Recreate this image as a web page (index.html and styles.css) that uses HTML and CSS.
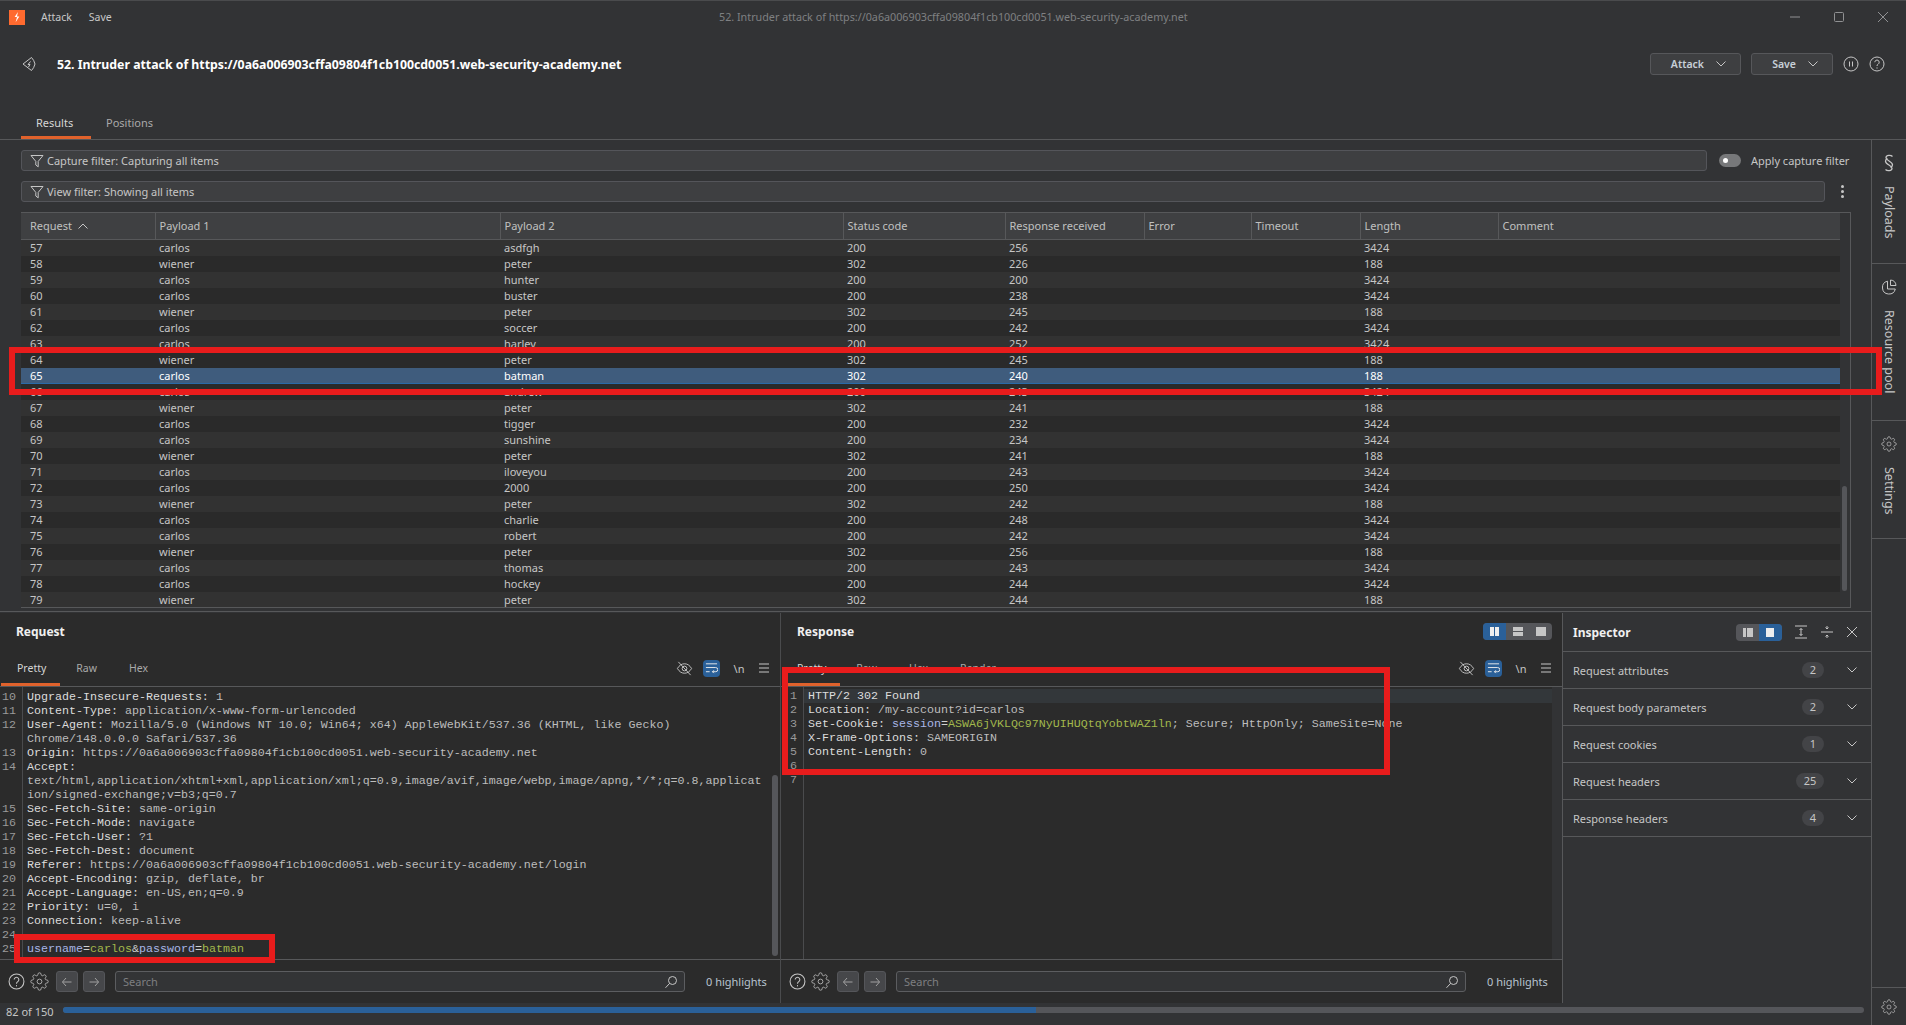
FILE: index.html
```html
<!DOCTYPE html>
<html>
<head>
	<title>52. Intruder attack</title>
	<link rel="stylesheet" href="styles.css">
</head>
<body>
<svg class="defs" width="0" height="0">
	<symbol id="gear" viewBox="0 0 24 24"><circle cx="12" cy="12" r="3"/><path d="M19.4 15a1.65 1.65 0 0 0 .33 1.82l.06.06a2 2 0 0 1 0 2.83 2 2 0 0 1-2.83 0l-.06-.06a1.65 1.65 0 0 0-1.82-.33 1.65 1.65 0 0 0-1 1.51V21a2 2 0 0 1-2 2 2 2 0 0 1-2-2v-.09A1.65 1.65 0 0 0 9 19.4a1.65 1.65 0 0 0-1.82.33l-.06.06a2 2 0 0 1-2.83 0 2 2 0 0 1 0-2.83l.06-.06a1.65 1.65 0 0 0 .33-1.82 1.65 1.65 0 0 0-1.51-1H3a2 2 0 0 1-2-2 2 2 0 0 1 2-2h.09A1.65 1.65 0 0 0 4.6 9a1.65 1.65 0 0 0-.33-1.82l-.06-.06a2 2 0 0 1 0-2.83 2 2 0 0 1 2.83 0l.06.06a1.65 1.65 0 0 0 1.82.33H9a1.65 1.65 0 0 0 1-1.51V3a2 2 0 0 1 2-2 2 2 0 0 1 2 2v.09a1.65 1.65 0 0 0 1 1.51 1.65 1.65 0 0 0 1.82-.33l.06-.06a2 2 0 0 1 2.83 0 2 2 0 0 1 0 2.83l-.06.06a1.65 1.65 0 0 0-.33 1.82V9a1.65 1.65 0 0 0 1.51 1H21a2 2 0 0 1 2 2 2 2 0 0 1-2 2h-.09a1.65 1.65 0 0 0-1.51 1z"/></symbol>
	<symbol id="help" viewBox="0 0 16 16"><circle cx="8" cy="8" r="7"/><path d="M5.8 6.2a2.2 2.2 0 1 1 3.4 1.9c-.8.5-1.2.9-1.2 1.9"/><path d="M8 11.4v1.2"/></symbol>
	<symbol id="chev" viewBox="0 0 12 8"><path d="M1.5 1.5 6 6l4.5-4.5"/></symbol>
	<symbol id="funnel" viewBox="0 0 14 14"><path d="M1 1.5h12L8.2 7.4v5.4L5.8 11V7.4z"/></symbol>
	<symbol id="search" viewBox="0 0 14 14"><circle cx="8.5" cy="5.5" r="4"/><path d="M5.6 8.4 1.5 12.8"/></symbol>
	<symbol id="eyeoff" viewBox="0 0 18 18"><path d="M1.5 9C3.5 5.6 6 4 9 4s5.500 1.600 7.500 5c-2 3.400-4.500 5-7.500 5s-5.500-1.600-7.500-5z"/><circle cx="9" cy="9" r="2.500"/><path d="M2.500 2 15.500 16"/></symbol>
	<symbol id="wrap" viewBox="0 0 14 12"><path d="M1 1.500h12M1 5.500h10.500a1.800 1.800 0 0 1 0 4.500H8M9.500 8.500 8 10l1.500 1.500M1 10h4"/></symbol>
	<symbol id="menu" viewBox="0 0 12 12"><path d="M1 2h10M1 6h10M1 10h10"/></symbol>
</svg>
<div class="window">
	<div class="titlebar">
		<span class="logo">
			<svg viewBox="0 0 16 16" width="16" height="15"><path d="M9 2 5.500 7.500H8L6.500 13l4-6H8z" fill="#fff"/></svg>
		</span>
		<span class="menu-item">Attack</span>
		<span class="menu-item">Save</span>
		<span class="window-title">52. Intruder attack of https://0a6a006903cffa09804f1cb100cd0051.web-security-academy.net</span>
		<div class="window-btns">
			<svg class="ln" width="12" height="12" viewBox="0 0 12 12"><path d="M1 6h10"/></svg>
			<svg class="ln" width="12" height="12" viewBox="0 0 12 12"><rect x="1.500" y="1.500" width="9" height="9" rx="1"/></svg>
			<svg class="ln" width="12" height="12" viewBox="0 0 12 12"><path d="M1 1l10 10M11 1 1 11"/></svg>
		</div>
	</div>

	<div class="page-head">
		<svg class="ln back" width="16" height="18" viewBox="0 0 16 18"><path d="M2 9 10.500 2.500Q13 5 14 9q-1 4-3.500 6.500z"/><path d="M9.500 6.500 7 9.500h2L7.500 12"/></svg>
		<h1>52. Intruder attack of https://0a6a006903cffa09804f1cb100cd0051.web-security-academy.net</h1>
		<button class="head-btn attack">Attack <svg class="ln" width="12" height="8"><use href="#chev"/></svg></button>
		<button class="head-btn save">Save <svg class="ln" width="12" height="8"><use href="#chev"/></svg></button>
		<svg class="ln" width="16" height="16" viewBox="0 0 16 16"><circle cx="8" cy="8" r="7"/><path d="M6.500 5.500v5M9.500 5.500v5"/></svg>
		<svg class="ln" width="16" height="16"><use href="#help"/></svg>
	</div>

	<div class="main-tabs">
		<span class="tab active">Results</span>
		<span class="tab">Positions</span>
	</div>

	<div class="body-row">
		<div class="work">
			<div class="filter-row">
				<div class="filter capture"><svg class="ln" width="14" height="14"><use href="#funnel"/></svg>Capture filter: Capturing all items</div>
				<span class="toggle"><i></i></span>
				<span class="toggle-label">Apply capture filter</span>
			</div>
			<div class="filter-row">
				<div class="filter view"><svg class="ln" width="14" height="14"><use href="#funnel"/></svg>View filter: Showing all items</div>
				<span class="kebab"><i></i><i></i><i></i></span>
			</div>

			<div class="results">
				<table>
					<colgroup>
						<col class="c1"><col class="c2"><col class="c3"><col class="c4"><col class="c5"><col class="c6"><col class="c7"><col class="c8"><col>
					</colgroup>
					<thead>
						<tr><th>Request <svg class="ln sort" width="12" height="8"><use href="#chev"/></svg></th><th>Payload 1</th><th>Payload 2</th><th>Status code</th><th>Response received</th><th>Error</th><th>Timeout</th><th>Length</th><th>Comment</th></tr>
					</thead>
					<tbody>
						<tr><td>57</td><td>carlos</td><td>asdfgh</td><td>200</td><td>256</td><td></td><td></td><td>3424</td><td></td></tr>
						<tr><td>58</td><td>wiener</td><td>peter</td><td>302</td><td>226</td><td></td><td></td><td>188</td><td></td></tr>
						<tr><td>59</td><td>carlos</td><td>hunter</td><td>200</td><td>200</td><td></td><td></td><td>3424</td><td></td></tr>
						<tr><td>60</td><td>carlos</td><td>buster</td><td>200</td><td>238</td><td></td><td></td><td>3424</td><td></td></tr>
						<tr><td>61</td><td>wiener</td><td>peter</td><td>302</td><td>245</td><td></td><td></td><td>188</td><td></td></tr>
						<tr><td>62</td><td>carlos</td><td>soccer</td><td>200</td><td>242</td><td></td><td></td><td>3424</td><td></td></tr>
						<tr><td>63</td><td>carlos</td><td>harley</td><td>200</td><td>252</td><td></td><td></td><td>3424</td><td></td></tr>
						<tr><td>64</td><td>wiener</td><td>peter</td><td>302</td><td>245</td><td></td><td></td><td>188</td><td></td></tr>
						<tr class="selected"><td>65</td><td>carlos</td><td>batman</td><td>302</td><td>240</td><td></td><td></td><td>188</td><td></td></tr>
						<tr><td>66</td><td>carlos</td><td>andrew</td><td>200</td><td>243</td><td></td><td></td><td>3424</td><td></td></tr>
						<tr><td>67</td><td>wiener</td><td>peter</td><td>302</td><td>241</td><td></td><td></td><td>188</td><td></td></tr>
						<tr><td>68</td><td>carlos</td><td>tigger</td><td>200</td><td>232</td><td></td><td></td><td>3424</td><td></td></tr>
						<tr><td>69</td><td>carlos</td><td>sunshine</td><td>200</td><td>234</td><td></td><td></td><td>3424</td><td></td></tr>
						<tr><td>70</td><td>wiener</td><td>peter</td><td>302</td><td>241</td><td></td><td></td><td>188</td><td></td></tr>
						<tr><td>71</td><td>carlos</td><td>iloveyou</td><td>200</td><td>243</td><td></td><td></td><td>3424</td><td></td></tr>
						<tr><td>72</td><td>carlos</td><td>2000</td><td>200</td><td>250</td><td></td><td></td><td>3424</td><td></td></tr>
						<tr><td>73</td><td>wiener</td><td>peter</td><td>302</td><td>242</td><td></td><td></td><td>188</td><td></td></tr>
						<tr><td>74</td><td>carlos</td><td>charlie</td><td>200</td><td>248</td><td></td><td></td><td>3424</td><td></td></tr>
						<tr><td>75</td><td>carlos</td><td>robert</td><td>200</td><td>242</td><td></td><td></td><td>3424</td><td></td></tr>
						<tr><td>76</td><td>wiener</td><td>peter</td><td>302</td><td>256</td><td></td><td></td><td>188</td><td></td></tr>
						<tr><td>77</td><td>carlos</td><td>thomas</td><td>200</td><td>243</td><td></td><td></td><td>3424</td><td></td></tr>
						<tr><td>78</td><td>carlos</td><td>hockey</td><td>200</td><td>244</td><td></td><td></td><td>3424</td><td></td></tr>
						<tr><td>79</td><td>wiener</td><td>peter</td><td>302</td><td>244</td><td></td><td></td><td>188</td><td></td></tr>
					</tbody>
				</table>
				<div class="table-scroll"><i></i></div>
			</div>

			<div class="panels">
				<section class="panel request">
					<div class="panel-head"><h2>Request</h2></div>
					<div class="editor-tabs">
						<span class="etab active">Pretty</span>
						<span class="etab">Raw</span>
						<span class="etab">Hex</span>
						<div class="editor-tools">
							<svg class="ln" width="17" height="17"><use href="#eyeoff"/></svg>
							<span class="wrap-btn"><svg class="ln" width="13" height="12"><use href="#wrap"/></svg></span>
							<span class="nl">\n</span>
							<svg class="ln" width="12" height="12"><use href="#menu"/></svg>
						</div>
					</div>
					<div class="code">
						<div class="line"><b>10</b><span>Upgrade-Insecure-Requests: <em>1</em></span></div>
						<div class="line"><b>11</b><span>Content-Type: <em>application/x-www-form-urlencoded</em></span></div>
						<div class="line"><b>12</b><span>User-Agent: <em>Mozilla/5.0 (Windows NT 10.0; Win64; x64) AppleWebKit/537.36 (KHTML, like Gecko)</em></span></div>
						<div class="line"><b></b><span><em>Chrome/148.0.0.0 Safari/537.36</em></span></div>
						<div class="line"><b>13</b><span>Origin: <em>https://0a6a006903cffa09804f1cb100cd0051.web-security-academy.net</em></span></div>
						<div class="line"><b>14</b><span>Accept:</span></div>
						<div class="line"><b></b><span><em>text/html,application/xhtml+xml,application/xml;q=0.9,image/avif,image/webp,image/apng,*/*;q=0.8,applicat</em></span></div>
						<div class="line"><b></b><span><em>ion/signed-exchange;v=b3;q=0.7</em></span></div>
						<div class="line"><b>15</b><span>Sec-Fetch-Site: <em>same-origin</em></span></div>
						<div class="line"><b>16</b><span>Sec-Fetch-Mode: <em>navigate</em></span></div>
						<div class="line"><b>17</b><span>Sec-Fetch-User: <em>?1</em></span></div>
						<div class="line"><b>18</b><span>Sec-Fetch-Dest: <em>document</em></span></div>
						<div class="line"><b>19</b><span>Referer: <em>https://0a6a006903cffa09804f1cb100cd0051.web-security-academy.net/login</em></span></div>
						<div class="line"><b>20</b><span>Accept-Encoding: <em>gzip, deflate, br</em></span></div>
						<div class="line"><b>21</b><span>Accept-Language: <em>en-US,en;q=0.9</em></span></div>
						<div class="line"><b>22</b><span>Priority: <em>u=0, i</em></span></div>
						<div class="line"><b>23</b><span>Connection: <em>keep-alive</em></span></div>
						<div class="line"><b>24</b><span></span></div>
						<div class="line"><b>25</b><span><u>username</u><s>=</s><q>carlos</q><s>&amp;</s><u>password</u><s>=</s><q>batman</q></span></div>
						<div class="code-scroll"></div>
					</div>
					<div class="search-row">
						<svg class="ln foot-icon" width="17" height="17"><use href="#help"/></svg>
						<svg class="ln foot-icon gear-icon" width="19" height="19"><use href="#gear"/></svg>
						<span class="nav-btn"><svg class="ln" width="12" height="12" viewBox="0 0 12 12"><path d="M10.500 6h-9M5 2 1.500 6 5 10"/></svg></span>
						<span class="nav-btn"><svg class="ln" width="12" height="12" viewBox="0 0 12 12"><path d="M1.500 6h9M7 2l3.500 4L7 10"/></svg></span>
						<div class="search"><span>Search</span><svg class="ln" width="14" height="14"><use href="#search"/></svg></div>
						<span class="highlights">0 highlights</span>
					</div>
				</section>

				<section class="panel response">
					<div class="panel-head">
						<h2>Response</h2>
						<div class="seg">
							<span class="on"><i class="bars-v"></i></span>
							<span><i class="bars-h"></i></span>
							<span><i class="bar-one"></i></span>
						</div>
					</div>
					<div class="editor-tabs">
						<span class="etab active">Pretty</span>
						<span class="etab">Raw</span>
						<span class="etab">Hex</span>
						<span class="etab">Render</span>
						<div class="editor-tools">
							<svg class="ln" width="17" height="17"><use href="#eyeoff"/></svg>
							<span class="wrap-btn"><svg class="ln" width="13" height="12"><use href="#wrap"/></svg></span>
							<span class="nl">\n</span>
							<svg class="ln" width="12" height="12"><use href="#menu"/></svg>
						</div>
					</div>
					<div class="code">
						<div class="line current"><b>1</b><span>HTTP/2 302 Found</span></div>
						<div class="line"><b>2</b><span>Location: <em>/my-account?id=carlos</em></span></div>
						<div class="line"><b>3</b><span>Set-Cookie: <u>session</u><s>=</s><q>ASWA6jVKLQc97NyUIHUQtqYobtWAZ1ln</q><em>; Secure; HttpOnly; SameSite=None</em></span></div>
						<div class="line"><b>4</b><span>X-Frame-Options: <em>SAMEORIGIN</em></span></div>
						<div class="line"><b>5</b><span>Content-Length: <em>0</em></span></div>
						<div class="line"><b>6</b><span></span></div>
						<div class="line"><b>7</b><span></span></div>
					</div>
					<div class="search-row">
						<svg class="ln foot-icon" width="17" height="17"><use href="#help"/></svg>
						<svg class="ln foot-icon gear-icon" width="19" height="19"><use href="#gear"/></svg>
						<span class="nav-btn"><svg class="ln" width="12" height="12" viewBox="0 0 12 12"><path d="M10.500 6h-9M5 2 1.500 6 5 10"/></svg></span>
						<span class="nav-btn"><svg class="ln" width="12" height="12" viewBox="0 0 12 12"><path d="M1.500 6h9M7 2l3.500 4L7 10"/></svg></span>
						<div class="search"><span>Search</span><svg class="ln" width="14" height="14"><use href="#search"/></svg></div>
						<span class="highlights">0 highlights</span>
					</div>
				</section>

				<aside class="inspector">
					<div class="insp-head">
						<h2>Inspector</h2>
						<div class="seg small">
							<span><i class="dock-l"></i></span>
							<span class="on"><i class="dock-r"></i></span>
						</div>
						<svg class="ln" width="14" height="14" viewBox="0 0 14 14"><path d="M1 1h12M1 13h12M7 3.500v7M5.500 5 7 3.500 8.500 5M5.500 9 7 10.500 8.500 9"/></svg>
						<svg class="ln" width="14" height="14" viewBox="0 0 14 14"><path d="M1 7h12M7 1v3M5.500 2.500 7 4l1.500-1.500M7 13v-3M5.500 11.500 7 10l1.500 1.500"/></svg>
						<svg class="ln" width="12" height="12" viewBox="0 0 12 12"><path d="M1 1l10 10M11 1 1 11"/></svg>
					</div>
					<div class="insp-row"><span>Request attributes</span><em>2</em><svg class="ln" width="12" height="8"><use href="#chev"/></svg></div>
					<div class="insp-row"><span>Request body parameters</span><em>2</em><svg class="ln" width="12" height="8"><use href="#chev"/></svg></div>
					<div class="insp-row"><span>Request cookies</span><em>1</em><svg class="ln" width="12" height="8"><use href="#chev"/></svg></div>
					<div class="insp-row"><span>Request headers</span><em class="wide">25</em><svg class="ln" width="12" height="8"><use href="#chev"/></svg></div>
					<div class="insp-row"><span>Response headers</span><em>4</em><svg class="ln" width="12" height="8"><use href="#chev"/></svg></div>
				</aside>
			</div>

			<div class="status-row">
				<span>82 of 150</span>
				<div class="progress"><div class="progress-fill" style="width:54%"></div></div>
			</div>
		</div>

		<nav class="sidebar">
			<div class="side-tab payloads">
				<svg class="ln sect" width="14" height="18" viewBox="0 0 14 18"><path d="M10.500 2.500C9 1 4 .8 4 3.800c0 2.800 6.500 3.700 6.500 7 0 1.500-1 2.200-2 2.600"/><path d="M5.500 4.600c-1 .4-2 1.100-2 2.600 0 3.300 6.500 4.200 6.500 7 0 3-5 2.800-6.500 1.300"/></svg>
				<span>Payloads</span>
			</div>
			<div class="side-tab pool">
				<svg class="ln" width="16" height="16" viewBox="0 0 16 16"><path d="M6.500 2.200A6.500 6.500 0 1 0 14.300 10H6.500z"/><path d="M9.500 1a6 6 0 0 1 5.500 5.500H9.500z"/></svg>
				<span>Resource pool</span>
			</div>
			<div class="side-tab settings">
				<svg class="ln" width="16" height="16"><use href="#gear"/></svg>
				<span>Settings</span>
			</div>
			<div class="side-fill"></div>
			<div class="side-gear"><svg class="ln" width="16" height="16"><use href="#gear"/></svg></div>
		</nav>
	</div>

	<div class="mark mark-row"></div>
	<div class="mark mark-body"></div>
	<div class="mark mark-resp"></div>
</div>
</body>
</html>
```

FILE: styles.css
```css
*{
	box-sizing: border-box;
}
html, body{
	margin: 0;
	height: 100%;
	background: #2a2a2a;
}
body{
	font-family: "Noto Sans", sans-serif;
	font-size: 11px;
	color: #c6c6c6;
	overflow: hidden;
}
.defs{
	position: absolute;
}
.ln{
	fill: none;
	stroke: #c6c6c6;
	stroke-width: 1;
	flex: none;
}
symbol{
	overflow: visible;
}
h1, h2{
	margin: 0;
}
em, s, u, q{
	font-style: normal;
	text-decoration: none;
	quotes: none;
}
button{
	font: inherit;
}

.window{
	position: relative;
	width: 1906px;
	height: 1025px;
	background: #323335;
	display: flex;
	flex-direction: column;
	border-top: 1px solid #4a4b4d;
	overflow: hidden;
}

/* title bar */
.titlebar{
	height: 34px;
	display: flex;
	align-items: center;
	position: relative;
	padding: 0 0 2px 9px;
	font-size: 10.5px;
}
.logo{
	width: 16px;
	height: 15px;
	background: #ff6a2f;
	margin-right: 16px;
	display: flex;
}
.menu-item{
	margin-right: 17px;
	color: #c8c8c8;
}
.window-title{
	position: absolute;
	left: 719px;
	top: 9px;
	font-size: 10.75px;
	color: #7f8082;
}
.window-btns{
	margin-left: auto;
	display: flex;
	gap: 32px;
	padding-right: 17px;
}
.window-btns .ln{
	stroke: #909193;
}

/* page header */
.page-head{
	height: 58px;
	display: flex;
	align-items: center;
	padding: 0 21px;
	gap: 10px;
}
.page-head h1{
	font-size: 12.3px;
	font-weight: 700;
	color: #fff;
	margin: 0 auto 0 10px;
}
.head-btn{
	height: 22px;
	background: #3e3f41;
	border: 1px solid #56575a;
	border-radius: 3px;
	color: #c8d0d8;
	font-size: 10.5px;
	font-weight: 600;
	display: flex;
	align-items: center;
	justify-content: flex-end;
	gap: 11px;
	padding: 0 13px 0 0;
}
.attack{
	width: 91px;
}
.save{
	width: 82px;
}

.main-tabs{
	height: 47px;
	display: flex;
	align-items: flex-end;
	padding-left: 21px;
	border-bottom: 1px solid #57585a;
}
.tab{
	height: 28px;
	min-width: 70px;
	padding: 0 15px;
	line-height: 24px;
	color: #a9a9a9;
}
.tab.active{
	border-bottom: 3px solid #e0622c;
	color: #d6d6d6;
}

.body-row{
	flex: 1;
	display: flex;
	min-height: 0;
}
.work{
	width: 1871px;
	display: flex;
	flex-direction: column;
}

/* filters */
.filter-row{
	display: flex;
	align-items: center;
	padding-left: 21px;
	margin-top: 10px;
	height: 21px;
}
.filter{
	height: 21px;
	background: #3e3f41;
	border: 1px solid #54555a;
	border-radius: 3px;
	display: flex;
	align-items: center;
	gap: 3px;
	padding-left: 8px;
}
.capture{
	width: 1686px;
}
.view{
	width: 1804px;
}
.toggle{
	width: 22px;
	height: 13px;
	border-radius: 7px;
	background: #77787a;
	margin-left: 12px;
	display: flex;
	align-items: center;
	padding-left: 4px;
}
.toggle i{
	width: 5px;
	height: 5px;
	background: #fff;
	border-radius: 50%;
}
.toggle-label{
	margin-left: 10px;
	white-space: nowrap;
}
.kebab{
	margin-left: 16px;
	display: flex;
	flex-direction: column;
	gap: 2px;
}
.kebab i{
	width: 3px;
	height: 3px;
	background: #c6c6c6;
	border-radius: 50%;
}

/* results table */
.results{
	margin: 10px 20px 3px 21px;
	height: 396px;
	border: 1px solid #57585a;
	border-left: 0;
	display: flex;
	overflow: hidden;
	flex: none;
}
table{
	width: 1819px;
	table-layout: fixed;
	border-collapse: collapse;
	flex: none;
}
.c1{ width: 134px; }
.c2{ width: 345px; }
.c3{ width: 343px; }
.c4{ width: 162px; }
.c5{ width: 139px; }
.c6{ width: 107px; }
.c7{ width: 109px; }
.c8{ width: 138px; }
th{
	height: 26px;
	background: #3f4042;
	border-bottom: 1px solid #57585a;
	border-left: 1px solid #57585a;
	text-align: left;
	font-weight: 400;
	padding: 0 0 0 4px;
	color: #c0c0c0;
}
th:first-child{
	padding-left: 9px;
	border-left: 0;
}
.sort{
	transform: rotate(180deg);
	margin-left: 2px;
}
td{
	height: 16px;
	padding: 0 0 0 4px;
	line-height: 16px;
	white-space: nowrap;
	overflow: hidden;
}
td:first-child{
	padding-left: 9px;
}
tbody tr:nth-child(odd){
	background: #323232;
}
tbody tr:nth-child(even){
	background: #2a2a2a;
}
tbody tr.selected{
	background: #3f5c7d;
	color: #fff;
}
tr.selected td{
	box-shadow: inset 0 -1px #2a6aa8;
}
.table-scroll{
	flex: 1;
	position: relative;
}
.table-scroll i{
	position: absolute;
	left: 2px;
	top: 273px;
	width: 5px;
	height: 105px;
	background: #55565a;
	border-radius: 3px;
}

/* request / response */
.panels{
	height: 392px;
	flex: none;
	display: flex;
	border-top: 1px solid #57585a;
	padding-top: 1px;
}
.panel{
	background: #2b2b2b;
	display: flex;
	flex-direction: column;
	flex: none;
}
.request{
	width: 781px;
	border-right: 1px solid #4a4b4d;
}
.response{
	width: 781px;
}
.panel-head{
	height: 37px;
	display: flex;
	align-items: center;
	padding: 0 10px 0 16px;
	justify-content: space-between;
}
.panel h2, .inspector h2{
	font-size: 12px;
	font-weight: 700;
	color: #f0f0f0;
}
.seg{
	display: flex;
	height: 17px;
	width: 69px;
	border-radius: 4px;
	background: #55565a;
	overflow: hidden;
}
.seg span{
	flex: 1;
	display: flex;
	align-items: center;
	justify-content: center;
}
.seg .on{
	background: #2a6099;
}
.bars-v{
	width: 9px;
	height: 9px;
	border-left: 4px solid #eee;
	border-right: 4px solid #eee;
}
.bars-h{
	width: 10px;
	height: 9px;
	border-top: 4px solid #c6c6c6;
	border-bottom: 4px solid #c6c6c6;
}
.bar-one{
	width: 10px;
	height: 9px;
	background: #c6c6c6;
}
.seg.small{
	width: 46px;
}
.dock-l, .dock-r{
	width: 10px;
	height: 9px;
	background: #eee;
}
.dock-l{
	border-left: 3px solid #c6c6c6;
	background: #c6c6c6;
	box-shadow: inset 1px 0 #55565a;
}
.dock-r{
	box-shadow: inset -2px 0 #2a6099, inset -3px 0 #eee;
}
.editor-tabs{
	height: 37px;
	display: flex;
	align-items: flex-end;
	border-bottom: 1px solid #57585a;
	padding-left: 1px;
	flex: none;
}
.response .editor-tabs{
	padding-left: 7px;
}
.etab{
	height: 27px;
	padding: 0 16px;
	font-size: 10.5px;
	line-height: 18px;
	color: #a9a9a9;
}
.etab.active{
	border-bottom: 3px solid #e0622c;
	color: #d6d6d6;
	padding-right: 14px;
}
.response .etab.active{
	padding-left: 9px;
}
.editor-tools{
	margin-left: auto;
	align-self: center;
	display: flex;
	align-items: center;
	padding-right: 10px;
	gap: 10px;
}
.wrap-btn{
	width: 17px;
	height: 17px;
	border-radius: 4px;
	background: #2a6099;
	display: flex;
	align-items: center;
	justify-content: center;
}
.wrap-btn .ln{
	stroke: #eee;
}
.nl{
	width: 14px;
	text-align: center;
	margin: 0 2px;
}

/* code */
.code{
	flex: 1;
	position: relative;
	padding-top: 2px;
	font-family: "Liberation Mono", monospace;
	font-size: 11.67px;
	line-height: 14px;
	color: #dcdcdc;
	overflow: hidden;
	background-image: linear-gradient(#4a4b4d, #4a4b4d);
	background-size: 1px 100%;
	background-position: 22px 0;
	background-repeat: no-repeat;
}
.request .code{
	padding-top: 3px;
}
.line{
	display: flex;
	height: 14px;
}
.line b{
	width: 16px;
	margin-right: 11px;
	text-align: right;
	font-weight: 400;
	color: #9a9a9a;
	flex: none;
}
.line span{
	white-space: pre;
}
.line em{
	color: #bdbdbd;
}
.line u{
	color: #a8b6e6;
}
.line s{
	color: #d0d0d0;
}
.line q{
	color: #a2b84c;
}
.line.current{
	background: linear-gradient(#33373a, #33373a) no-repeat 23px 0;
	width: 771px;
}
.response .code::after{
	content: "";
	position: absolute;
	right: 0;
	top: 0;
	bottom: 0;
	width: 10px;
	background: #323335;
}
.code-scroll{
	position: absolute;
	top: 88px;
	left: 772px;
	width: 6px;
	height: 181px;
	background: #55565a;
	border-radius: 3px;
}

/* search bar under the editors */
.search-row{
	height: 44px;
	flex: none;
	display: flex;
	align-items: center;
	border-top: 1px solid #57585a;
	padding-left: 8px;
}
.foot-icon{
	margin-right: 5px;
}
.gear-icon{
	margin-right: 7px;
}
.nav-btn{
	width: 22px;
	height: 21px;
	background: #46474a;
	border: 1px solid #55565a;
	border-radius: 3px;
	margin-right: 5px;
	display: flex;
	align-items: center;
	justify-content: center;
}
.nav-btn .ln{
	stroke: #a0a0a0;
}
.search{
	width: 570px;
	height: 21px;
	margin-left: 5px;
	background: #333436;
	border: 1px solid #5c5d60;
	border-radius: 3px;
	display: flex;
	align-items: center;
	justify-content: space-between;
	padding: 0 6px 0 7px;
	color: #7e7f81;
}
.highlights{
	margin-left: 21px;
	color: #b8c4d0;
	white-space: nowrap;
}

/* inspector */
.inspector{
	width: 309px;
	flex: none;
	border-left: 1px solid #57585a;
}
.insp-head{
	height: 38px;
	display: flex;
	align-items: center;
	gap: 12px;
	padding: 0 13px 0 10px;
}
.insp-head h2{
	margin-right: auto;
}
.insp-row{
	height: 37px;
	display: flex;
	align-items: center;
	border-top: 1px solid #57585a;
	padding: 0 13px 0 10px;
}
.insp-row:last-child{
	border-bottom: 1px solid #57585a;
	height: 38px;
}
.insp-row span{
	margin-right: auto;
}
.insp-row em{
	width: 22px;
	height: 16px;
	line-height: 16px;
	border-radius: 8px;
	background: #434447;
	text-align: center;
	margin-right: 22px;
}
.insp-row em.wide{
	width: 28px;
}

/* progress */
.status-row{
	height: 22px;
	flex: none;
	display: flex;
	align-items: flex-start;
	padding: 0 7px 0 6px;
}
.status-row span{
	width: 47px;
	margin-top: 2px;
	line-height: 14px;
	white-space: nowrap;
}
.progress{
	width: 1801px;
	height: 6px;
	margin: 4px 0 0 10px;
	background: #55565a;
	border-radius: 3px;
	overflow: hidden;
}
.progress-fill{
	height: 100%;
	background: #2a6099;
}

/* right rail */
.sidebar{
	flex: 1;
	border-left: 1px solid #57585a;
	display: flex;
	flex-direction: column;
}
.side-tab{
	display: flex;
	flex-direction: column;
	align-items: center;
	border-bottom: 1px solid #57585a;
	gap: 15px;
	flex: none;
	padding-top: 15px;
}
.side-tab span{
	writing-mode: vertical-rl;
	font-size: 12.5px;
	white-space: nowrap;
}
.payloads{
	height: 124px;
	padding-top: 14px;
	gap: 14px;
}
.sect{
	stroke-width: 1.3;
}
.pool{
	height: 157px;
}
.settings{
	height: 118px;
}
.side-fill{
	flex: 1;
}
.side-gear{
	height: 38px;
	border-top: 1px solid #57585a;
	display: flex;
	align-items: center;
	justify-content: center;
}

/* red boxes drawn over the screenshot */
.mark{
	position: absolute;
	border: 6px solid #e81c1c;
}
.mark-row{
	left: 9px;
	top: 346px;
	width: 1873px;
	height: 48px;
}
.mark-body{
	left: 14px;
	top: 933px;
	width: 261px;
	height: 29px;
}
.mark-resp{
	left: 782px;
	top: 666px;
	width: 608px;
	height: 108px;
}
```
